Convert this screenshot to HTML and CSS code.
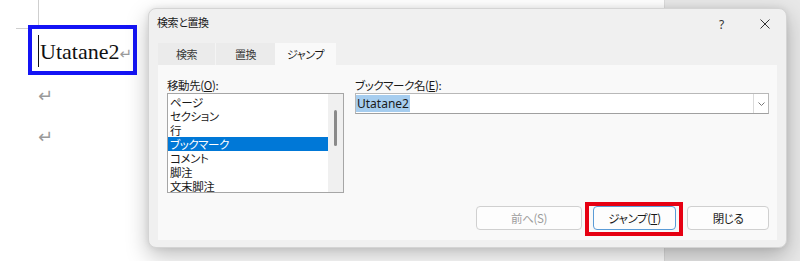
FILE: index.html
```html
<!DOCTYPE html>
<html lang="ja">
<head>
<meta charset="utf-8">
<title>検索と置換</title>
<link rel="stylesheet" href="styles.css">
</head>
<body>
<div class="doc">
  <div class="crop"></div>
  <div class="para-box"><span class="caret"></span>Utatane2<span class="mark">↵</span></div>
  <div class="para"><span class="mark">↵</span></div>
  <div class="para"><span class="mark">↵</span></div>
</div>

<div class="dialog">
  <div class="titlebar">
    <div class="title">検索と置換</div>
    <div class="tb-btn help">?</div>
    <div class="tb-btn close">
      <svg width="10" height="10" viewBox="0 0 10 10"><path d="M0.5 0.5L9.5 9.5M9.5 0.5L0.5 9.5" stroke="#333" stroke-width="1" fill="none"/></svg>
    </div>
  </div>
  <div class="tabs">
    <div class="tab t1">検索</div>
    <div class="tab t2">置換</div>
    <div class="tab t3 active">ジャンプ</div>
  </div>
  <div class="panel">
    <div class="fields">
      <div class="col-left">
        <div class="label">移動先(<u>O</u>):</div>
        <div class="listbox">
          <div class="items">
            <div class="item">ページ</div>
            <div class="item">セクション</div>
            <div class="item">行</div>
            <div class="item selected">ブックマーク</div>
            <div class="item">コメント</div>
            <div class="item">脚注</div>
            <div class="item">文末脚注</div>
          </div>
          <div class="scrollbar"><div class="thumb"></div></div>
        </div>
      </div>
      <div class="col-right">
        <div class="label">ブックマーク名(<u>E</u>):</div>
        <div class="combo">
          <div class="combo-text"><span class="sel">Utatane2</span></div>
          <div class="combo-btn">
            <svg width="7" height="4" viewBox="0 0 7 4"><path d="M0.5 0.5L3.5 3.5L6.5 0.5" stroke="#777" stroke-width="1" fill="none"/></svg>
          </div>
        </div>
      </div>
    </div>
    <div class="buttons">
      <div class="btn prev disabled">前へ(S)</div>
      <div class="btn jump">ジャンプ(<u>T</u>)</div>
      <div class="btn close-btn">閉じる</div>
    </div>
  </div>
</div>
</body>
</html>
```

FILE: styles.css
```css
html, body {
  margin: 0;
  padding: 0;
}
body {
  width: 800px;
  height: 261px;
  overflow: hidden;
  position: relative;
  background: linear-gradient(to right, #ffffff 0, #ffffff 664px, #dcdcdc 664px, #dcdcdc 665px, #e8e8e8 665px);
  font-family: "Noto Sans", "Noto Sans CJK JP", sans-serif;
  color: #1a1a1a;
}

/* document */
.doc {
  position: relative;
  padding: 25px 0 0 28px;
}
.crop {
  position: absolute;
  left: 16px;
  top: 0;
  width: 22px;
  height: 28px;
  border-right: 1px solid #cfcfcf;
  border-bottom: 1px solid #cfcfcf;
}
.para-box {
  position: relative;
  display: inline-block;
  vertical-align: top;
  background: #fff;
  border: 4px solid #1414f5;
  padding: 4px 1px 0 6px;
  height: 38px;
  line-height: 38px;
  font-family: "Liberation Serif", serif;
  font-size: 22px;
  color: #111;
}
.caret {
  display: inline-block;
  width: 1px;
  height: 32px;
  background: #111;
  vertical-align: -8px;
  margin-right: 1px;
}
.mark {
  font-family: "DejaVu Sans", sans-serif;
  font-size: 18px;
  color: #9a9a9a;
}
.para-box .mark {
  font-size: 15px;
}
.para {
  height: 41px;
  line-height: 41px;
  padding-left: 10px;
}

/* dialog */
.dialog {
  position: absolute;
  left: 148px;
  top: 8px;
  width: 639px;
  height: 240px;
  box-sizing: border-box;
  background: #f0f0f0;
  border: 1px solid #d4d4d4;
  border-radius: 8px;
  box-shadow: 0 8px 22px rgba(0, 0, 0, 0.26), 0 0 6px rgba(0, 0, 0, 0.08);
  display: flex;
  flex-direction: column;
  font-family: "Noto Sans CJK JP", "Noto Sans", sans-serif;
  font-feature-settings: "palt";
  font-size: 11px;
  letter-spacing: -0.4px;
}
.titlebar {
  height: 34px;
  display: flex;
  align-items: flex-start;
}
.title {
  flex: 1;
  padding: 5px 0 0 8px;
  line-height: 16px;
  font-size: 11px;
  color: #1a1a1a;
}
.tb-btn {
  width: 43px;
  height: 28px;
  display: flex;
  align-items: center;
  justify-content: center;
  color: #333;
}
.help {
  font-family: "Noto Sans", sans-serif;
  font-size: 12px;
  letter-spacing: 0;
  padding-top: 1px;
}
.close {
  padding-top: 1px;
}
.tabs {
  display: flex;
  height: 22px;
  padding-left: 9px;
}
.tab {
  display: flex;
  align-items: center;
  justify-content: center;
  background: #ebebeb;
  color: #3a3a3a;
  font-size: 11px;
}
.t1 { width: 57px; border-right: 1px solid #f4f4f4; }
.t2 { width: 59px; }
.t3 { width: 61px; }
.tab.active {
  background: #f9f9f9;
  color: #1a1a1a;
}
.panel {
  margin: 0 9px;
  height: 175px;
  background: #f9f9f9;
  display: flex;
  flex-direction: column;
  padding: 12px 8px 10px 9px;
  box-sizing: border-box;
}
.fields {
  display: grid;
  grid-template-columns: 177px 1fr;
  column-gap: 11px;
}
.label {
  line-height: 16px;
  height: 16px;
  font-size: 11.5px;
}
.listbox {
  height: 100px;
  box-sizing: border-box;
  border: 1px solid #a6a6a6;
  background: #fff;
  display: flex;
  overflow: hidden;
}
.items {
  flex: 1;
  padding-top: 1px;
}
.item {
  height: 14px;
  line-height: 14px;
  padding-left: 2px;
  font-size: 11.5px;
  white-space: nowrap;
}
.item.selected {
  background: #0078d7;
  color: #fff;
}
.scrollbar {
  width: 15px;
  background: #f0f0f0;
  display: flex;
  justify-content: center;
  padding-top: 16px;
  box-sizing: border-box;
}
.thumb {
  width: 3px;
  height: 36px;
  border-radius: 2px;
  background: #8a8a8a;
}
.combo {
  height: 21px;
  box-sizing: border-box;
  border: 1px solid #b8b8b8;
  border-bottom-color: #a0a0a0;
  background: #fff;
  display: flex;
}
.combo-text {
  flex: 1;
  padding: 1px 0 0 0;
}
.sel {
  display: inline-block;
  background: #a6cdef;
  color: #1a1a1a;
  font-family: "Noto Sans", sans-serif;
  font-size: 12px;
  letter-spacing: 0;
  line-height: 17px;
  padding: 0 1px;
}
.combo-btn {
  width: 14px;
  border-left: 1px solid #dadada;
  display: flex;
  align-items: center;
  justify-content: center;
}
.buttons {
  margin-top: auto;
  display: flex;
  justify-content: flex-end;
  gap: 11px;
}
.btn {
  height: 24px;
  box-sizing: border-box;
  border: 1px solid #d0d0d0;
  border-radius: 4px;
  background: #fdfdfd;
  display: flex;
  align-items: center;
  justify-content: center;
  font-size: 11.5px;
}
.prev { width: 106px; }
.jump {
  width: 83px;
  border-color: #5a9bd6;
  position: relative;
}
.jump::after {
  content: "";
  position: absolute;
  left: -9px;
  right: -8px;
  top: -5px;
  bottom: -7px;
  border: 4px solid #e60012;
}
.close-btn { width: 82px; }
.disabled { color: #9c9c9c; }
u {
  text-underline-offset: 1px;
}
```
